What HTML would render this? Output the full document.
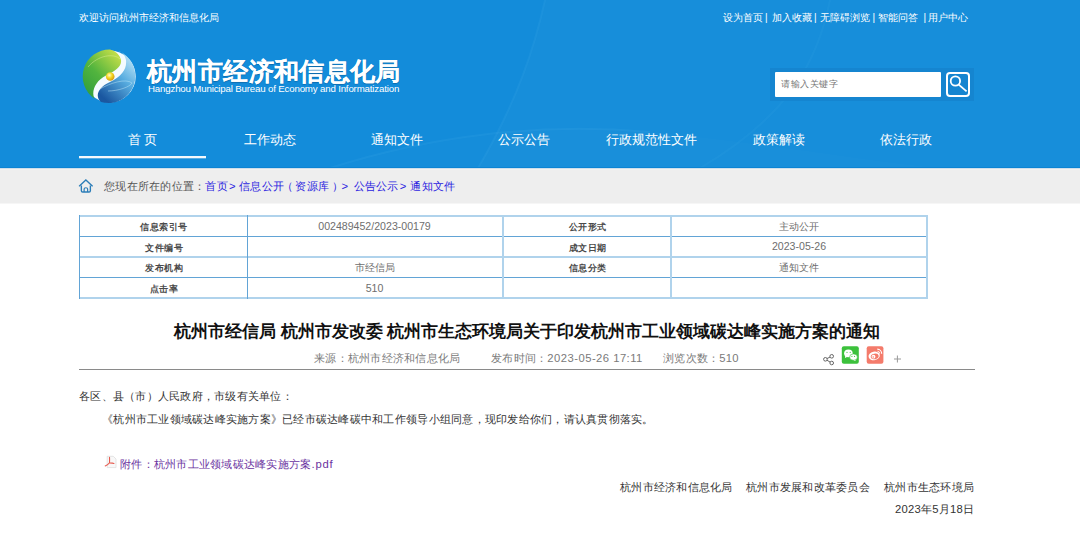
<!DOCTYPE html>
<html><head><meta charset="utf-8">
<style>
*{margin:0;padding:0;box-sizing:border-box}
html,body{width:1080px;height:553px;overflow:hidden;background:#fff;font-family:"Liberation Sans",sans-serif;color:#333}
.abs{position:absolute;white-space:nowrap}
#hdr{position:absolute;left:0;top:0;width:1080px;height:168px;background:#138cda;overflow:hidden}
#crumb{position:absolute;left:0;top:168px;width:1080px;height:35px;background:#eeeeee;box-shadow:0 1px 0 #f6f6f6}
.w{color:#fff}
.tl{font-size:10px;top:12px;line-height:12px}
.nav{font-size:13px;top:131px;line-height:18px;color:#fff;width:127px;text-align:center}
.tb{position:absolute;left:79px;top:215px;width:849px;height:84px;border:1px solid #5aa3d6}
.hl{position:absolute;left:0;width:847px;height:1px;background:#5aa3d6}
.vl{position:absolute;top:0;width:1px;height:82px;background:#5aa3d6}
.c{position:absolute;text-align:center;font-size:10px;line-height:12px;color:#6e6e6e;white-space:nowrap;top:0}
.c.k{color:#4a4a4a;font-weight:bold;font-size:9px;letter-spacing:0.5px}
.body{font-size:11.26px;letter-spacing:0.26px;line-height:14px;color:#333}
</style></head><body>
<div id="hdr">
  <svg class="abs" style="left:0;top:0" width="1080" height="168">
    <path d="M545 0 C535 45 518 100 478 168 L1080 168 L1080 0 Z" fill="#ffffff" opacity="0.018"/>
    <path d="M545 0 C535 45 518 100 478 168" stroke="#7fd0ff" stroke-width="2" fill="none" opacity="0.07"/>
    <path d="M330 168 C430 136 540 122 650 132 C760 142 860 160 940 168 Z" fill="#ffffff" opacity="0.012"/>
    <path d="M330 168 C430 136 540 122 650 132" stroke="#7fd0ff" stroke-width="2" fill="none" opacity="0.07"/>
    <path d="M830 0 C818 60 790 115 700 168" stroke="#7fd0ff" stroke-width="2" fill="none" opacity="0.05"/>
  </svg>
  <div class="abs w tl" style="left:79px">欢迎访问杭州市经济和信息化局</div>
  <div class="abs w tl" style="left:723px">设为首页</div>
  <div class="abs w tl" style="left:765px">|</div>
  <div class="abs w tl" style="left:772px">加入收藏</div>
  <div class="abs w tl" style="left:814px">|</div>
  <div class="abs w tl" style="left:820px">无障碍浏览</div>
  <div class="abs w tl" style="left:872.5px">|</div>
  <div class="abs w tl" style="left:878px">智能问答</div>
  <div class="abs w tl" style="left:923.5px">|</div>
  <div class="abs w tl" style="left:928px">用户中心</div>
  <svg class="abs" style="left:80px;top:47px" width="60" height="60" viewBox="0 0 60 60">
    <defs>
      <linearGradient id="gg" x1="0" y1="1" x2="0.8" y2="0">
        <stop offset="0" stop-color="#2a9a3c"/><stop offset="0.5" stop-color="#52b43e"/><stop offset="1" stop-color="#c4de48"/>
      </linearGradient>
      <linearGradient id="bg" x1="0.9" y1="0.1" x2="0.3" y2="1">
        <stop offset="0" stop-color="#bfe6f8"/><stop offset="0.45" stop-color="#58ade0"/><stop offset="1" stop-color="#1a57a0"/>
      </linearGradient>
      <radialGradient id="yb" cx="0.4" cy="0.35" r="0.65">
        <stop offset="0" stop-color="#fffbd0"/><stop offset="0.5" stop-color="#f5d820"/><stop offset="1" stop-color="#d49a10"/>
      </radialGradient>
    </defs>
    <circle cx="29.7" cy="29.4" r="26" fill="#f4fbff"/>
    <path d="M30 2.4 A27 27 0 0 0 14.5 51.7 C11 45 15 34 26 28.5 C36 24 42 19 41 13 C40 8 36 4 30 2.5 Z" fill="url(#gg)"/>
    <path d="M38 3.8 A27 27 0 0 1 21 55 C15 50 17 41 30 35 C42 29 47 22 46 13 C45 8 42 5 38 3.8 Z" fill="url(#bg)"/>
    <path d="M8 20 C18 8 34 6 40 12" stroke="#e6f4a0" stroke-width="0.7" fill="none" opacity="0.6"/>
    <path d="M20 42 C30 36 46 31 52 36 C50 40 38 44 28 44" stroke="#bfe8f8" stroke-width="0.8" fill="none" opacity="0.6"/>
    <circle cx="30.2" cy="29.5" r="4.3" fill="url(#yb)"/>
  </svg>
  <div class="abs w" style="left:147px;top:56px;font-size:25px;letter-spacing:0.38px;font-weight:bold;line-height:30px;-webkit-text-stroke:0.1px #fff;text-shadow:0 1px 1px rgba(0,40,80,0.35)">杭州市经济和信息化局</div>
  <div class="abs w" style="left:148px;top:83px;font-size:9.7px;letter-spacing:-0.17px;line-height:11px">Hangzhou Municipal Bureau of Economy and Informatization</div>
  <div class="abs" style="left:770px;top:68px;width:204px;height:33px;background:#1585d0"></div>
  <div class="abs" style="left:775px;top:72px;width:166px;height:25px;background:#fff;border-radius:1px;font-size:9.45px;letter-spacing:0.5px;color:#777;line-height:23px;padding-left:6px">请输入关键字</div>
  <div class="abs" style="left:946px;top:72px;width:24px;height:25px;border:2px solid #fff;border-radius:4px"></div>
  <svg class="abs" style="left:946px;top:72px" width="25" height="25"><circle cx="9.4" cy="9" r="4.7" stroke="#fff" stroke-width="1.8" fill="none"/><path d="M12.7 12.6 L20.6 19.4" stroke="#fff" stroke-width="1.8"/></svg>
  <div class="abs nav" style="left:79px">首 页</div>
  <div class="abs nav" style="left:206px">工作动态</div>
  <div class="abs nav" style="left:333px">通知文件</div>
  <div class="abs nav" style="left:460px">公示公告</div>
  <div class="abs nav" style="left:588px">行政规范性文件</div>
  <div class="abs nav" style="left:715px">政策解读</div>
  <div class="abs nav" style="left:842px">依法行政</div>
  <div class="abs" style="left:0;top:167px;width:1080px;height:1px;background:#0c84d3"></div>
  <div class="abs" style="left:79px;top:156px;width:127px;height:2px;background:#f4f8fc;box-shadow:0 1px 0 rgba(255,255,255,0.3)"></div>
</div>
<div id="crumb">
  <div class="abs" style="left:0;top:0;width:1080px;height:1px;background:#cfdfeb"></div>
  <div class="abs" style="left:0;top:1px;width:1080px;height:1px;background:#f3f2f0"></div>
  <svg class="abs" style="left:78px;top:10px" width="16" height="16" viewBox="0 0 16 16"><g transform="translate(0.6 0.9) scale(0.92)"><path d="M0.9 7.6 L7.9 1.2 L14.9 7.6" stroke="#2b7db8" stroke-width="1.5" fill="none" stroke-linecap="round"/><path d="M3 7.2 V12.8 Q3 14.2 4.4 14.2 H11.4 Q12.8 14.2 12.8 12.8 V7.2" stroke="#2b7db8" stroke-width="1.5" fill="none"/><path d="M6 14.2 V11 Q6 9.6 7.9 9.6 Q9.8 9.6 9.8 11 V14.2" stroke="#2b7db8" stroke-width="1.3" fill="none"/></g></svg>
  <div class="abs" style="left:104px;top:12px;font-size:11.26px;letter-spacing:0.26px;line-height:13px;color:#555">您现在所在的位置：<span style="color:#2b1de0">首页<span style="margin-left:1px">&gt;</span> <span>信息公开</span><span style="margin-left:-2px">（</span><span style="margin-left:2px">资源库</span><span style="margin-left:3px;margin-right:-2px">）</span>&gt; <span style="margin-left:2px">公告公示</span><span style="margin-left:1px">&gt;</span> <span style="margin-left:0.5px">通知文件</span></span></div>
</div>
<div id="tbl">
  <div class="abs" style="left:79px;top:215px;width:849px;height:2px;background:#b0d3ec"></div>
  <div class="abs" style="left:79px;top:236px;width:849px;height:1px;background:#62a4d6"></div>
  <div class="abs" style="left:79px;top:256px;width:849px;height:2px;background:#b0d3ec"></div>
  <div class="abs" style="left:79px;top:277px;width:849px;height:1px;background:#62a4d6"></div>
  <div class="abs" style="left:79px;top:297px;width:849px;height:2px;background:#b0d3ec"></div>
  <div class="abs" style="left:79px;top:215px;width:1px;height:84px;background:#62a4d6"></div>
  <div class="abs" style="left:247px;top:215px;width:1px;height:84px;background:#62a4d6"></div>
  <div class="abs" style="left:502px;top:215px;width:2px;height:84px;background:#b0d3ec"></div>
  <div class="abs" style="left:670px;top:215px;width:2px;height:84px;background:#b0d3ec"></div>
  <div class="abs" style="left:926px;top:215px;width:2px;height:84px;background:#b0d3ec"></div>
  <div class="c k" style="left:80px;width:168px;top:221px">信息索引号</div>
  <div class="c" style="left:247px;width:255px;top:219.5px;font-size:10.6px">002489452/2023-00179</div>
  <div class="c k" style="left:503px;width:169px;top:221px">公开形式</div>
  <div class="c" style="left:671px;width:256px;top:221px">主动公开</div>
  <div class="c k" style="left:80px;width:168px;top:242px">文件编号</div>
  <div class="c k" style="left:503px;width:169px;top:242px">成文日期</div>
  <div class="c" style="left:671px;width:256px;top:240px;font-size:10.6px">2023-05-26</div>
  <div class="c k" style="left:80px;width:168px;top:261.5px">发布机构</div>
  <div class="c" style="left:247px;width:255px;top:261.5px">市经信局</div>
  <div class="c k" style="left:503px;width:169px;top:261.5px">信息分类</div>
  <div class="c" style="left:671px;width:256px;top:261.5px">通知文件</div>
  <div class="c k" style="left:80px;width:168px;top:283px">点击率</div>
  <div class="c" style="left:247px;width:255px;top:281.5px;font-size:10.6px">510</div>
</div>
<div class="abs" style="left:174px;top:322px;font-size:17px;font-weight:bold;color:#111;line-height:20px">杭州市经信局 杭州市发改委 杭州市生态环境局关于印发杭州市工业领域碳达峰实施方案的通知</div>
<div class="abs body" style="left:314px;top:351px;color:#7a7a7a">来源：杭州市经济和信息化局</div>
<div class="abs body" style="left:491px;top:351px;color:#7a7a7a">发布时间：<span style="letter-spacing:0.47px">2023-05-26 17:11</span></div>
<div class="abs body" style="left:663px;top:351px;color:#7a7a7a">浏览次数：510</div>
<svg class="abs" style="left:820px;top:344px" width="85" height="22">
  <g stroke="#666" stroke-width="1" fill="#fff"><path d="M11.7 12.3 L5.4 15.3 L11.7 19"/><circle cx="11.7" cy="12.3" r="1.8"/><circle cx="5.4" cy="15.3" r="1.8"/><circle cx="11.7" cy="19" r="1.8"/></g>
  <rect x="21.8" y="2.3" width="17" height="17.4" rx="2" fill="#3cc13c"/>
  <ellipse cx="28.4" cy="9.3" rx="4.3" ry="3.9" fill="#fff"/><path d="M25.2 11.8 L25 14 L27.4 12.7 Z" fill="#fff"/>
  <circle cx="27" cy="8.3" r="0.6" fill="#3cc13c"/><circle cx="30.2" cy="8.3" r="0.6" fill="#3cc13c"/>
  <ellipse cx="33.5" cy="13.1" rx="3.9" ry="3.2" fill="#fff" stroke="#3cc13c" stroke-width="0.6"/><path d="M35 15.6 L35.8 17 L33.6 16.2 Z" fill="#fff"/>
  <circle cx="31.9" cy="12.4" r="0.55" fill="#3cc13c"/><circle cx="34.6" cy="12.4" r="0.55" fill="#3cc13c"/>
  <rect x="46.7" y="2.3" width="16.7" height="17.4" rx="2" fill="#f47b6b"/>
  <ellipse cx="54.2" cy="11.9" rx="5.7" ry="4.2" transform="rotate(-12 54.2 11.9)" fill="#fff"/>
  <ellipse cx="54.7" cy="12.4" rx="4" ry="2.8" transform="rotate(-12 54.7 12.4)" fill="#f47b6b"/>
  <circle cx="53.5" cy="12.7" r="1.9" fill="#fff"/><circle cx="53.2" cy="13" r="0.75" fill="#f47b6b"/>
  <path d="M57.3 5.1 A4.6 4.6 0 0 1 61.7 9.8" stroke="#fff" stroke-width="1.2" fill="none"/><path d="M57.5 7.3 A2.3 2.3 0 0 1 59.7 9.6" stroke="#fff" stroke-width="1" fill="none"/>
  <path d="M77.4 11.5 V18.5 M74 15 H81" stroke="#999" stroke-width="1"/>
</svg>
<div class="abs" style="left:79px;top:369px;width:896px;height:1px;background:#8a8a8a"></div>
<div class="abs body" style="left:79px;top:389px">各区、县（市）人民政府，市级有关单位：</div>
<div class="abs body" style="left:102px;top:412px">《杭州市工业领域碳达峰实施方案》已经市碳达峰碳中和工作领导小组同意，现印发给你们，请认真贯彻落实。</div>
<svg class="abs" style="left:104px;top:455px" width="14" height="14" viewBox="0 0 14 14">
  <path d="M3.2 1.3 H9.3 L12 4 V12.6 H3.2 Z" fill="#f8f8f8" stroke="#dedede" stroke-width="0.8"/>
  <path d="M5.5 2.4 C5.6 4.5 5.6 6.5 5.5 7.8 C4.5 9.2 3 10.3 1.2 10.9 M5.5 7.8 C7 8 8.6 8.2 10 8.5" fill="none" stroke="#e65a4e" stroke-width="1.1" stroke-linecap="round"/>
</svg>
<div class="abs body" style="left:120px;top:457px;color:#6a32a0">附件：杭州市工业领域碳达峰实施方案<span style="letter-spacing:0.85px">.pdf</span></div>
<div class="abs body" style="left:620px;top:480px">杭州市经济和信息化局</div>
<div class="abs body" style="left:746px;top:480px">杭州市发展和改革委员会</div>
<div class="abs body" style="left:884px;top:480px">杭州市生态环境局</div>
<div class="abs body" style="left:895px;top:502px">2023年5月18日</div>
</body></html>
